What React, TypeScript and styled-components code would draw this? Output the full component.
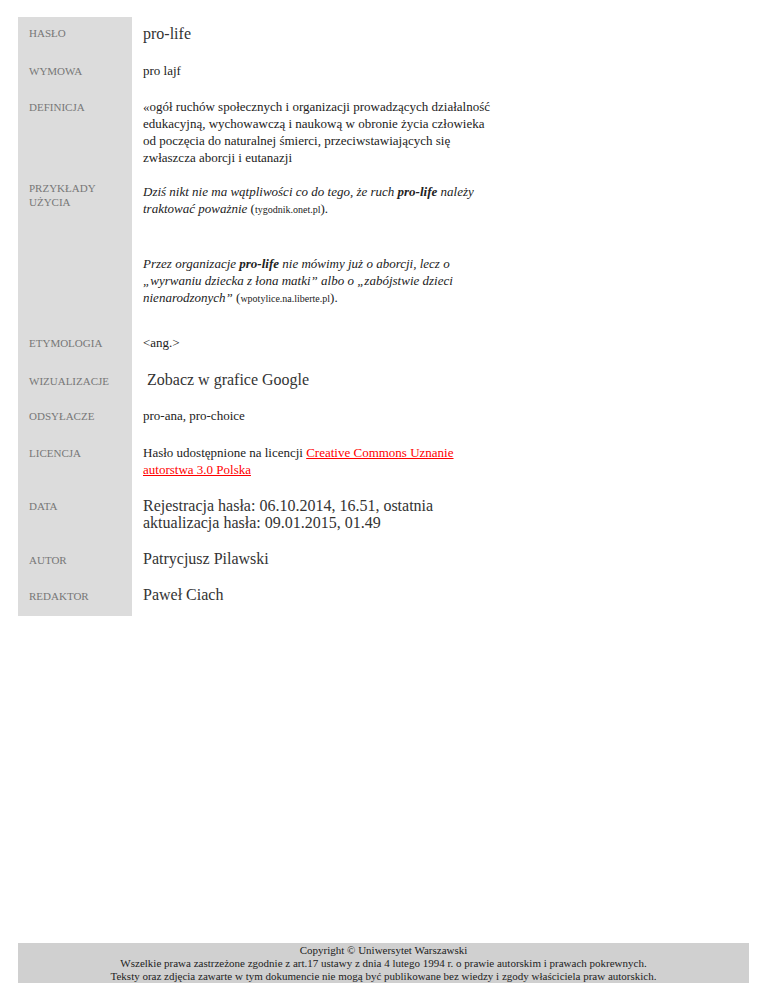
import * as React from "react";
import styled, { createGlobalStyle } from "styled-components";

const GlobalStyle = createGlobalStyle`
  html, body {
    margin: 0;
    padding: 0;
    background: #ffffff;
  }
  body {
    font-family: "Liberation Serif", "Times New Roman", serif;
    color: #222222;
  }
`;

const Page = styled.div`
  min-height: 100vh;
  box-sizing: border-box;
  display: flex;
  flex-direction: column;
  justify-content: space-between;
  padding: 17px 19px 11px 18px;
`;

const Entry = styled.div`
  display: grid;
  grid-template-columns: 114px 1fr;
`;

const Label = styled.div`
  background: #dcdcdc;
  padding: ${p => p.$top || 10}px 0 ${p => p.$bottom || 11}px 11px;
  font-size: 11px;
  line-height: 14px;
  color: #777777;
  text-transform: uppercase;
`;

const Value = styled.div`
  padding: ${p => p.$top || 8}px 0 ${p => p.$bottom || 11}px 11px;
  width: 350px;
  font-size: ${p => (p.$large ? "16px" : "13px")};
  line-height: ${p => (p.$large ? "18px" : "17px")};
  color: ${p => (p.$large ? "#333333" : "#222222")};
`;

const Line = styled.span`
  display: block;
  white-space: nowrap;
`;

const Example = styled.p`
  margin: 0;
  font-style: italic;
  & + & {
    margin-top: 37px;
  }
  b {
    font-weight: bold;
  }
`;

const Source = styled.span`
  font-style: normal;
  small {
    font-size: 10px;
  }
`;

const Link = styled.a`
  color: #ff0000;
  text-decoration: underline;
`;

const Footer = styled.footer`
  background: #d0d0d0;
  padding: 1.5px 0 0;
  text-align: center;
  font-size: 11px;
  line-height: 13px;
  color: #222222;
`;

const rows = [
  { label: "Hasło", value: "pro-life", large: true, lTop: 9 },
  { label: "Wymowa", value: "pro lajf" },
  {
    label: "Definicja",
    value:
      "«ogół ruchów społecznych i organizacji prowadzących działalność edukacyjną, wychowawczą i naukową w obronie życia człowieka od poczęcia do naturalnej śmierci, przeciwstawiających się zwłaszcza aborcji i eutanazji",
    bottom: 9,
  },
];

export default function App() {
  return (
    <>
      <GlobalStyle />
      <Page>
        <Entry>
          {rows.map(r => (
            <React.Fragment key={r.label}>
              <Label $top={r.lTop} $bottom={r.bottom}>
                {r.label}
              </Label>
              <Value $large={r.large} $bottom={r.bottom}>
                {r.value}
              </Value>
            </React.Fragment>
          ))}

          <Label $top={6} $bottom={19}>
            Przykłady użycia
          </Label>
          <Value $bottom={19}>
            <Example>
              <Line>
                Dziś nikt nie ma wątpliwości co do tego, że ruch <b>pro-life</b> należy
              </Line>
              <Line>
                traktować poważnie{" "}
                <Source>
                  (<small>tygodnik.onet.pl</small>).
                </Source>
              </Line>
            </Example>
            <Example>
              <Line>
                Przez organizacje <b>pro-life</b> nie mówimy już o aborcji, lecz o
              </Line>
              <Line>„wyrwaniu dziecka z łona matki” albo o „zabójstwie dzieci</Line>
              <Line>
                nienarodzonych”{" "}
                <Source>
                  (<small>wpotylice.na.liberte.pl</small>).
                </Source>
              </Line>
            </Example>
          </Value>

          <Label $bottom={12}>Etymologia</Label>
          <Value $bottom={12}>&lt;ang.&gt;</Value>

          <Label $top={11} $bottom={10}>
            Wizualizacje
          </Label>
          <Value $large $bottom={10}>
            &nbsp;Zobacz w grafice Google
          </Value>

          <Label $bottom={12}>Odsyłacze</Label>
          <Value $bottom={12}>pro-ana, pro-choice</Value>

          <Label>Licencja</Label>
          <Value>
            <Line>
              Hasło udostępnione na licencji <Link href="#">Creative Commons Uznanie</Link>
            </Line>
            <Line>
              <Link href="#">autorstwa 3.0 Polska</Link>
            </Line>
          </Value>

          <Label $top={10}>Data</Label>
          <Value $large style={{ lineHeight: "17px" }}>
            Rejestracja hasła: 06.10.2014, 16.51, ostatnia aktualizacja hasła:
            09.01.2015, 01.49
          </Value>

          <Label $top={11} $bottom={10}>
            Autor
          </Label>
          <Value $large $bottom={10}>
            Patrycjusz Pilawski
          </Value>

          <Label $top={11} $bottom={12}>
            Redaktor
          </Label>
          <Value $large $bottom={12}>
            Paweł Ciach
          </Value>
        </Entry>

        <Footer>
          Copyright © Uniwersytet Warszawski
          <br />
          Wszelkie prawa zastrzeżone zgodnie z art.17 ustawy z dnia 4 lutego 1994 r. o
          prawie autorskim i prawach pokrewnych.
          <br />
          Teksty oraz zdjęcia zawarte w tym dokumencie nie mogą być publikowane bez
          wiedzy i zgody właściciela praw autorskich.
        </Footer>
      </Page>
    </>
  );
}
